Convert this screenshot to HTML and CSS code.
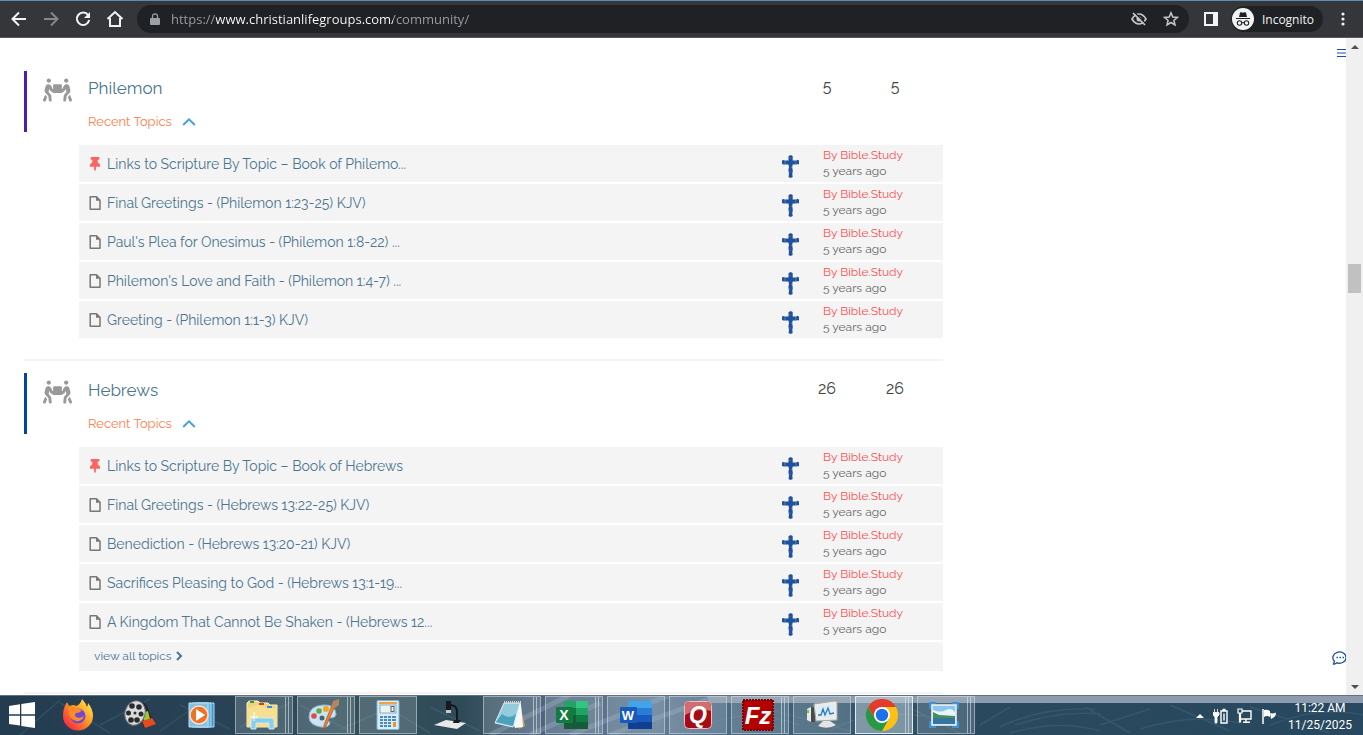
FILE: index.html
```html
<!DOCTYPE html>
<html lang="en">
<head>
  <meta charset="UTF-8">
  <meta name="viewport" content="width=device-width, initial-scale=1.0">
  <link rel="stylesheet" href="styles.css">
  <title>Community</title>
</head>
<body>

  <!-- shared icons -->
  <svg class="sprite" aria-hidden="true">
    <symbol id="people" viewBox="0 0 640 512">
      <path d="M128 96c26.500 0 48-21.500 48-48S154.500 0 128 0 80 21.500 80 48s21.500 48 48 48zm384 0c26.500 0 48-21.500 48-48S538.500 0 512 0s-48 21.500-48 48 21.500 48 48 48zm125.700 372.100l-44-110-41.100 46.400-2 18.200 27.700 69.200c5 12.500 17 20.100 29.700 20.100 4 0 8-.7 11.900-2.300 16.400-6.600 24.400-25.200 17.800-41.600zm-34.200-209.800L585 178.100c-4.600-20-18.600-36.800-37.500-44.900-18.500-8-39-6.700-56.100 3.300-22.700 13.400-39.700 34.500-48.100 59.400L432 229.800 416 240v-96c0-8.800-7.200-16-16-16H240c-8.800 0-16 7.200-16 16v96l-16.100-10.200-11.300-33.900c-8.300-25-25.400-46-48.100-59.400-17.200-10-37.600-11.300-56.100-3.300-18.900 8.100-32.900 24.900-37.500 44.900l-18.400 80.200c-4.600 20 .7 41.200 14.400 56.700l67.200 75.900 10.100 92.600C130 499.800 143.800 512 160 512c1.200 0 2.300-.1 3.500-.2 17.600-1.900 30.200-17.700 28.300-35.300l-10.100-92.800c-1.500-13-6.900-25.100-15.600-35l-43.300-49 17.600-70.300 6.800 20.400c4.100 12.500 11.900 23.400 24.500 32.600l51.100 32.500c4.600 2.900 12.100 4.600 17.200 5h160c5.100-.4 12.600-2.100 17.200-5l51.100-32.500c12.600-9.200 20.400-20 24.500-32.600l6.800-20.400 17.600 70.300-43.300 49c-8.700 9.900-14.100 22-15.600 35l-10.100 92.800c-1.900 17.600 10.800 33.400 28.300 35.300 1.200.1 2.300.2 3.500.2 16.100 0 30-12.100 31.800-28.500l10.100-92.600 67.200-75.900c13.600-15.500 19-36.700 14.400-56.700zM46.300 358.100l-44 110c-6.600 16.400 1.400 35 17.800 41.600 16.800 6.600 35.100-1.700 41.600-17.800l27.700-69.200-2-18.200-41.100-46.400z"/>
    </symbol>
    <symbol id="pin" viewBox="0 0 384 512">
      <path d="M298 214L286 96H328c13 0 24-11 24-24V24c0-13-11-24-24-24H56C43 0 32 11 32 24v48c0 13 11 24 24 24h42L86 214C37 237 0 277 0 328c0 13 11 24 24 24h136v104l1 4 24 48c3 6 11 6 14 0l24-48 1-4V352h136c13 0 24-11 24-24 0-51-38-91-86-114z"/>
    </symbol>
    <symbol id="file" viewBox="0 0 12 14">
      <path d="M1.200 .8H7.500L11 4.300V13.200H1.200Z" fill="none" stroke="currentColor" stroke-width="1.500" stroke-linejoin="round"/>
      <path d="M7 .8V4.800H11Z"/>
    </symbol>
    <symbol id="chevron-up" viewBox="0 0 14 8">
      <path d="M1.200 7L7 1.400L12.800 7" fill="none" stroke="currentColor" stroke-width="1.900"/>
    </symbol>
    <symbol id="cross" viewBox="0 0 17 23">
      <path d="M6.500 1.200L8.500 0L10.700 1V5.600H14.500L15.500 4.800L17 5.500V9.500L15.500 9L14.500 9.500H10.700L10.200 12L10.800 16L10.300 19L10.700 22L8.500 23L6.500 22L7 19L6.400 15L7 12L6.400 9.500H3L1.500 9.500L0 9V5.500L1.500 5L2.500 5.600H6.500Z"/>
      <path d="M3 6V9M13.800 6V9M7.500 3.500H8.500M9 12.500H10M7.500 17H8.500" stroke="#7f9cc3" stroke-width=".6"/>
    </symbol>
  </svg>

  <header class="toolbar">
    <button class="tool" aria-label="Back"><svg width="16" height="16" viewBox="0 0 16 16"><path d="M15 8H2M8 1.500L1.500 8L8 14.500"/></svg></button>
    <button class="tool tool-off" aria-label="Forward"><svg width="16" height="16" viewBox="0 0 16 16"><path d="M1 8H14M8 1.500L14.500 8L8 14.500"/></svg></button>
    <button class="tool" aria-label="Reload"><svg width="16" height="16" viewBox="0 0 16 16"><path d="M13.200 4.200A6.200 6.200 0 1 0 14.200 9"/><path d="M15 1V7H9Z" fill="currentColor" stroke="none"/></svg></button>
    <button class="tool" aria-label="Home"><svg width="18" height="18" viewBox="0 0 18 18"><path d="M1.500 9L9 2L16.500 9M4 8V16H14V8"/></svg></button>
    <div class="address">
      <svg class="lock" width="10" height="13" viewBox="0 0 10 13"><path d="M2.500 5V3.300a2.500 2.500 0 0 1 5 0V5" fill="none" stroke="#9aa0a6" stroke-width="1.300"/><rect y="5" width="10" height="7" rx="1" fill="#9aa0a6"/></svg>
      <input class="url" type="text" aria-label="Address" value="https://www.christianlifegroups.com/community/">
      <button class="tool tool-dim" aria-label="Cookies blocked"><svg width="16" height="14" viewBox="0 0 16 14"><path d="M1 7Q4 2 8 2T15 7Q12 12 8 12T1 7Z" stroke-width="1.700"/><circle cx="8" cy="7" r="2.500" fill="currentColor" stroke="none"/><path d="M3 0L16 13" stroke="#202124" stroke-width="1.500"/><path d="M2 1L14 13" stroke-width="1.700"/></svg></button>
      <button class="tool tool-dim" aria-label="Bookmark"><svg width="16" height="16" viewBox="0 0 16 16"><path d="M8 1.800L9.800 6L14.400 6.400L10.900 9.400L12 14L8 11.500L4 14L5.100 9.400L1.600 6.400L6.200 6Z" stroke-width="1.500"/></svg></button>
    </div>
    <button class="tool" aria-label="Side panel"><svg width="14" height="14" viewBox="0 0 14 14"><path d="M0 0H14V14H0ZM2 2V12H9V2Z" fill="currentColor" fill-rule="evenodd" stroke="none"/></svg></button>
    <button class="incognito">
      <svg width="22" height="22" viewBox="0 0 22 22"><circle cx="11" cy="11" r="11" fill="#f1f3f4"/><path d="M7 9L8 4.500Q9.500 4 11 4.700Q12.500 4 14 4.500L15 9Z" fill="#202124"/><path d="M4 10.500H18M9.500 15Q11 14 12.500 15" stroke="#202124" stroke-width="1.200" fill="none"/><circle cx="7.500" cy="15" r="2.200" fill="none" stroke="#202124" stroke-width="1.100"/><circle cx="14.500" cy="15" r="2.200" fill="none" stroke="#202124" stroke-width="1.100"/></svg>
      Incognito
    </button>
    <button class="tool" aria-label="Menu"><svg width="4" height="14" viewBox="0 0 4 14"><g fill="currentColor" stroke="none"><circle cx="2" cy="2" r="1.600"/><circle cx="2" cy="7" r="1.600"/><circle cx="2" cy="12" r="1.600"/></g></svg></button>
  </header>

  <div class="viewport">
    <main class="page">

      <section class="forum">
        <div class="forum-head forum-purple">
          <svg class="forum-icon"><use href="#people"/></svg>
          <div class="forum-info">
            <a class="forum-name" href="#">Philemon</a>
            <button class="recent">Recent Topics <svg width="14" height="8"><use href="#chevron-up"/></svg></button>
          </div>
          <span class="count">5</span>
          <span class="count">5</span>
        </div>
        <ul class="topics">
          <li class="topic">
            <svg class="topic-icon topic-pin"><use href="#pin"/></svg>
            <a class="topic-name" href="#">Links to Scripture By Topic – Book of Philemo...</a>
            <svg class="avatar"><use href="#cross"/></svg>
            <div class="meta"><a href="#">By Bible.Study</a><span>5 years ago</span></div>
          </li>
          <li class="topic">
            <svg class="topic-icon"><use href="#file"/></svg>
            <a class="topic-name" href="#">Final Greetings - (Philemon 1:23-25) KJV)</a>
            <svg class="avatar"><use href="#cross"/></svg>
            <div class="meta"><a href="#">By Bible.Study</a><span>5 years ago</span></div>
          </li>
          <li class="topic">
            <svg class="topic-icon"><use href="#file"/></svg>
            <a class="topic-name" href="#">Paul's Plea for Onesimus - (Philemon 1:8-22) ...</a>
            <svg class="avatar"><use href="#cross"/></svg>
            <div class="meta"><a href="#">By Bible.Study</a><span>5 years ago</span></div>
          </li>
          <li class="topic">
            <svg class="topic-icon"><use href="#file"/></svg>
            <a class="topic-name" href="#">Philemon's Love and Faith - (Philemon 1:4-7) ...</a>
            <svg class="avatar"><use href="#cross"/></svg>
            <div class="meta"><a href="#">By Bible.Study</a><span>5 years ago</span></div>
          </li>
          <li class="topic">
            <svg class="topic-icon"><use href="#file"/></svg>
            <a class="topic-name" href="#">Greeting - (Philemon 1:1-3) KJV)</a>
            <svg class="avatar"><use href="#cross"/></svg>
            <div class="meta"><a href="#">By Bible.Study</a><span>5 years ago</span></div>
          </li>
        </ul>
      </section>

      <section class="forum">
        <div class="forum-head forum-blue">
          <svg class="forum-icon"><use href="#people"/></svg>
          <div class="forum-info">
            <a class="forum-name" href="#">Hebrews</a>
            <button class="recent">Recent Topics <svg width="14" height="8"><use href="#chevron-up"/></svg></button>
          </div>
          <span class="count">26</span>
          <span class="count">26</span>
        </div>
        <ul class="topics">
          <li class="topic">
            <svg class="topic-icon topic-pin"><use href="#pin"/></svg>
            <a class="topic-name" href="#">Links to Scripture By Topic – Book of Hebrews</a>
            <svg class="avatar"><use href="#cross"/></svg>
            <div class="meta"><a href="#">By Bible.Study</a><span>5 years ago</span></div>
          </li>
          <li class="topic">
            <svg class="topic-icon"><use href="#file"/></svg>
            <a class="topic-name" href="#">Final Greetings - (Hebrews 13:22-25) KJV)</a>
            <svg class="avatar"><use href="#cross"/></svg>
            <div class="meta"><a href="#">By Bible.Study</a><span>5 years ago</span></div>
          </li>
          <li class="topic">
            <svg class="topic-icon"><use href="#file"/></svg>
            <a class="topic-name" href="#">Benediction - (Hebrews 13:20-21) KJV)</a>
            <svg class="avatar"><use href="#cross"/></svg>
            <div class="meta"><a href="#">By Bible.Study</a><span>5 years ago</span></div>
          </li>
          <li class="topic">
            <svg class="topic-icon"><use href="#file"/></svg>
            <a class="topic-name" href="#">Sacrifices Pleasing to God - (Hebrews 13:1-19...</a>
            <svg class="avatar"><use href="#cross"/></svg>
            <div class="meta"><a href="#">By Bible.Study</a><span>5 years ago</span></div>
          </li>
          <li class="topic">
            <svg class="topic-icon"><use href="#file"/></svg>
            <a class="topic-name" href="#">A Kingdom That Cannot Be Shaken - (Hebrews 12...</a>
            <svg class="avatar"><use href="#cross"/></svg>
            <div class="meta"><a href="#">By Bible.Study</a><span>5 years ago</span></div>
          </li>
          <li class="view-all">
            <a href="#">view all topics <svg width="7" height="10" viewBox="0 0 7 10"><path d="M1 1L5 5L1 9" fill="none" stroke="currentColor" stroke-width="2"/></svg></a>
          </li>
        </ul>
      </section>

      <button class="float float-menu" aria-label="Open menu"><svg width="9" height="8" viewBox="0 0 9 8"><path d="M0 .5H9M0 4H9M0 7.500H9" stroke="#1d4f9c"/></svg></button>
      <button class="float float-chat" aria-label="Chat"><svg width="16" height="14" viewBox="0 0 16 14"><path d="M2.500 13Q1 13.500 1.500 12.500L2.500 10.300A6.600 5.600 0 1 1 5 11.800Q4 12.700 2.500 13Z" fill="none" stroke="#1d4f9c" stroke-width="1.300"/><path d="M4.500 6.500H6M7.500 6.500H9M10.500 6.500H12" stroke="#1d4f9c" stroke-width="1.500"/></svg></button>
    </main>

    <div class="scrollbar">
      <button class="scroll-arrow" aria-label="Scroll up"><svg width="8" height="4" viewBox="0 0 8 4"><path d="M0 4L4 0L8 4Z"/></svg></button>
      <div class="scroll-track"><div class="scroll-thumb"></div></div>
      <button class="scroll-arrow" aria-label="Scroll down"><svg width="8" height="4" viewBox="0 0 8 4"><path d="M0 0L4 4L8 0Z"/></svg></button>
    </div>
  </div>

  <footer class="taskbar">
    <!-- wallpaper showing through the bar -->
    <svg class="wallpaper" viewBox="0 0 1363 40" preserveAspectRatio="none" aria-hidden="true">
      <defs>
        <linearGradient id="wall" x2="1" y2="0">
          <stop offset="0" stop-color="#243c50"/><stop offset=".17" stop-color="#294256"/><stop offset=".25" stop-color="#34505b"/><stop offset=".34" stop-color="#304b58"/><stop offset=".4" stop-color="#50657e"/><stop offset=".48" stop-color="#667e97"/><stop offset=".55" stop-color="#45637d"/><stop offset=".63" stop-color="#36566d"/><stop offset=".72" stop-color="#2b495e"/><stop offset="1" stop-color="#27485f"/>
        </linearGradient>
      </defs>
      <rect width="1363" height="40" fill="url(#wall)"/>
      <g fill="none" stroke="#a8bdd3" stroke-opacity=".28" stroke-width="5"><path d="M490 40L570 0M530 40L600 8M570 40L670 0M610 40L720 0" /></g>
      <g fill="none" stroke="#6292a0" stroke-opacity=".2" stroke-width="1.500"><path d="M20 40L60 5M60 8L110 38M100 30L150 4M160 36L200 8M180 10L230 34M240 32L290 8M300 10L350 36M340 34L400 9M380 8L430 38M430 12L480 36M700 34Q740 10 800 30M760 12L850 36M830 36Q870 12 930 22M900 8L960 38M980 30L1010 12M1000 32Q1040 12 1095 14M1015 30Q1060 15 1100 19M1010 38Q1060 24 1100 36M1085 12L1130 38M1100 30L1150 14M1140 34Q1190 18 1240 28M1170 10L1230 36M1250 12L1330 38M1270 30Q1320 10 1363 20"/></g>
      <rect x="708" width="655" height="8" fill="#8c9bae"/>
      <path d="M0 .5H1363" stroke="#617084"/>
    </svg>

    <button class="start" aria-label="Start"><svg width="26" height="26" viewBox="0 0 26 26"><path d="M0 4L11 2.200V12.300H0ZM12.300 2L26 0V12.300H12.300ZM0 13.700H11V23.600L0 22ZM12.300 13.700H26V26L12.300 24Z" fill="#fff"/></svg></button>

    <button class="task" aria-label="Firefox"><svg width="32" height="32" viewBox="0 0 32 32"><defs><linearGradient id="ff" x1="1" y1="0" x2="0" y2="1"><stop offset=".1" stop-color="#ffe44a"/><stop offset=".45" stop-color="#ff9625"/><stop offset=".8" stop-color="#f93c3d"/><stop offset="1" stop-color="#e31587"/></linearGradient></defs><path d="M20 0Q24 4 25 8Q26 6 26 4Q31 10 31 17A15 14.500 0 0 1 1 17Q1 9 5 3Q6 6 8 7Q11 5 14 7Q18 6 20 0Z" fill="url(#ff)"/><circle cx="16" cy="17" r="7.500" fill="#6f48d8"/><path d="M6 9Q10 6 14 9L20 11Q18 14 14 14Q12 16 14 18Q18 20 22 17Q20 23 14 22Q7 20 7 13Z" fill="#ff8b24"/></svg></button>

    <button class="task" aria-label="Movie Maker"><svg width="32" height="32" viewBox="0 0 32 32"><path d="M12 1Q22 2 24 10L30 25L20 29L16 14Z" fill="#202326"/><path d="M13 3Q21 4 22 12L17 14Z" fill="#2c70c9"/><path d="M18 14L24 12L26 20L20 22Z" fill="#9dc72e"/><path d="M18 22L28 19L32 25L21 29Z" fill="#e74a1d"/><ellipse cx="11" cy="14" rx="10" ry="12.500" transform="rotate(16 11 14)" fill="#d8dadb" stroke="#686c70"/><g fill="#292c2f"><circle cx="8" cy="7" r="2.800"/><circle cx="15" cy="8" r="2.800"/><circle cx="4.500" cy="14" r="2.500"/><circle cx="17" cy="15" r="2.500"/><circle cx="7" cy="21" r="2.800"/><circle cx="13" cy="21" r="2.800"/><circle cx="11" cy="14" r="1.500"/></g></svg></button>

    <button class="task" aria-label="Media Player"><svg width="28" height="26" viewBox="0 0 28 26"><path d="M8 1H26V25H8Z" fill="#3f94c9" stroke="#a9dcf3"/><path d="M4 1H23V25H4Z" fill="#69b2dc" stroke="#a9dcf3"/><path d="M1 1H20V25H1Z" fill="#83c1e3" stroke="#b8e2f5"/><circle cx="11" cy="13" r="9" fill="#ed7225" stroke="#f7ded0" stroke-width="1.500"/><path d="M8 7L17 13L8 19Z" fill="#fff"/></svg></button>

    <button class="task open stacked" aria-label="Explorer"><svg width="32" height="30" viewBox="0 0 32 30"><path d="M1 27V3L3 1H12L14 3H22L24 5H31V27Z" fill="#edd57f" stroke="#fff2be"/><path d="M1 8L12 5L31 9V27H1Z" fill="#f6df91"/><path d="M4 2H8" stroke="#2c9b3e" stroke-width="2"/><path d="M13 4H18" stroke="#d83a2c" stroke-width="2"/><path d="M21 7H26" stroke="#318ee0" stroke-width="2"/><path d="M5 29V21Q5 18 8 18H25Q28 18 28 21V29H23V23H10V29Z" fill="#88cdec" stroke="#c7ecfa"/><path d="M8 12V21M4 17H12" stroke="#fff"/></svg></button>

    <button class="task open stacked" aria-label="Paint"><svg width="32" height="32" viewBox="0 0 32 32"><path d="M1 18Q1 7 15 6Q27 5 28 15Q28 19 22 19Q19 20 22 24Q21 29 13 28Q1 26 1 18Z" fill="#c9e3f2" stroke="#8db5cf"/><circle cx="6" cy="17" r="2.800" fill="#d84e48"/><circle cx="11" cy="12" r="2.800" fill="#5aad45"/><circle cx="18" cy="10" r="3" fill="#f2a529"/><circle cx="14" cy="19" r="2.500" fill="#466476"/><path d="M27 7L18 27L16 31L16 26L24 6Z" fill="#ec8432" stroke="#a8521a" stroke-width=".7"/><path d="M23 8L25 2L31 0L31 6L27 9Z" fill="#b6855e"/></svg></button>

    <button class="task open" aria-label="Calculator"><svg width="24" height="30" viewBox="0 0 24 30"><rect x="1" y=".5" width="22" height="29" rx="1" fill="#d5edfc" stroke="#81b3d8"/><path d="M3 3H21" stroke="#f5a23b" stroke-width="2"/><rect x="4" y="5" width="16" height="8" fill="#edf3ed" stroke="#8baabf"/><rect x="15" y="6.500" width="3" height="5" fill="none" stroke="#53626c"/><g fill="#4f87b6"><path d="M4 16h3v2h-3zM8 16h3v2h-3zM12 16h3v2h-3zM16 16h4v2h-4zM4 19h3v2h-3zM8 19h3v2h-3zM12 19h3v2h-3zM16 19h4v2h-4zM4 22h3v2h-3zM8 22h3v2h-3zM12 22h3v2h-3zM4 25h3v2h-3zM8 25h3v2h-3zM12 25h3v2h-3z"/></g><path d="M17 22H20V27H17Z" fill="#f39421"/></svg></button>

    <button class="task" aria-label="Document camera"><svg width="34" height="30" viewBox="0 0 34 30"><path d="M13 20L33 23L24 29L1 25Z" fill="#e7e8e8"/><path d="M17 5Q25 5 24 14V20" fill="none" stroke="#15191c" stroke-width="2"/><path d="M13 1H18V13H13Z" fill="#15191c"/><path d="M13 10H18V13H13Z" fill="#c7c9ca"/><path d="M21 20H28L26 23H20Z" fill="#181c1e"/></svg></button>

    <button class="task open stacked" aria-label="Notepad"><svg width="32" height="28" viewBox="0 0 32 28"><path d="M26 2L31 25L25 28Z" fill="#c7a369"/><path d="M11 2L27 3L29 26L21 27Z" fill="#f5f8f8"/><path d="M10 2H26L19 26L1 22Z" fill="#93cbdc" stroke="#d8eff5"/><path d="M8 13Q15 19 22 13L19 25L2 21Z" fill="#4ba2bd"/><path d="M10 1.500H27" stroke="#d7d9d9" stroke-width="3" stroke-dasharray="1 1"/></svg></button>

    <button class="task open stacked" aria-label="Excel"><svg width="32" height="28" viewBox="0 0 32 28"><path d="M8 0H20V7H8Z" fill="#21a366"/><path d="M20 0H32V7H20Z" fill="#33c481"/><path d="M8 7H20V14H8Z" fill="#107c41"/><path d="M20 7H32V14H20Z" fill="#21a366"/><path d="M8 14H32V28H8Z" fill="#185c37"/><path d="M20 14H32V21H20Z" fill="#107c41"/><rect y="6" width="17" height="16" rx="1" fill="#107c41"/><text class="glyph" x="8" y="19" font-size="14">X</text></svg></button>

    <button class="task open" aria-label="Word"><svg width="32" height="28" viewBox="0 0 32 28"><path d="M8 0H32V7H8Z" fill="#41a5ee"/><path d="M8 7H32V14H8Z" fill="#2b7cd3"/><path d="M8 14H32V21H8Z" fill="#185abd"/><path d="M8 21H32V28H8Z" fill="#103f91"/><rect y="6" width="17" height="16" rx="1" fill="#185abd"/><text class="glyph" x="8" y="19" font-size="13">W</text></svg></button>

    <button class="task open" aria-label="Quicken"><svg width="28" height="28" viewBox="0 0 28 28"><rect x=".5" y=".5" width="27" height="27" rx="4" fill="#a50c16" stroke="#efbcbf"/><path d="M1 5Q1 1 5 1H23Q27 1 27 5V10Q14 7 1 14Z" fill="#cf6d70"/><text class="glyph glyph-italic" x="14" y="22" font-size="23">Q</text></svg></button>

    <button class="task open stacked" aria-label="FileZilla"><svg width="32" height="32" viewBox="0 0 32 32"><rect x="1" y="1" width="30" height="30" fill="#b30000"/><rect x="1" y="1" width="30" height="30" fill="none" stroke="#7c0202" stroke-width="2" stroke-dasharray="2 1"/><text class="glyph glyph-italic" x="16" y="25" font-size="24">Fz</text></svg></button>

    <button class="task open" aria-label="Performance monitor"><svg width="32" height="28" viewBox="0 0 32 28"><path d="M1 8L5 6V21L1 19Z" fill="#e6e7e4"/><path d="M5 6L9 7V21L5 21Z" fill="#454c4d"/><path d="M2 9V12" stroke="#73c849" stroke-width="2"/><path d="M8 3L29 0Q31 0 31 2V19L10 20Z" fill="#ecece9" stroke="#a8adaf"/><path d="M11 5L28 3V16L12 17Z" fill="#dcedf8"/><path d="M12 14L15 14L17 8L19 14L22 7L24 13L28 12" fill="none" stroke="#2c79b8" stroke-width="1.300"/><path d="M17 20H24L30 24Q22 29 12 25Z" fill="#e3e4e2"/></svg></button>

    <button class="task open stacked active" aria-label="Chrome"><svg width="32" height="32" viewBox="0 0 32 32"><circle cx="16" cy="16" r="16" fill="#fbc116"/><path d="M16 8H29.900A16 16 0 0 0 2.100 8L9.100 20Z" fill="#e33b2e"/><path d="M2.100 8A16 16 0 0 0 16 32L22.900 20L9.100 20Z" fill="#279847"/><circle cx="16" cy="16" r="8" fill="#fff"/><circle cx="16" cy="16" r="6.200" fill="#1a73e8"/></svg></button>

    <button class="task open stacked" aria-label="Pictures"><svg width="30" height="26" viewBox="0 0 30 26"><path d="M1 7V1H7M23 1H29V7M29 19V25H23M7 25H1V19" fill="none" stroke="#3b91d7" stroke-width="3"/><rect x="3" y="3" width="24" height="20" fill="#8bc6ed" stroke="#f3f6f7" stroke-width="1.500"/><path d="M4 8Q12 11 17 8T26 10V15H4Z" fill="#e7f4fb"/><path d="M4 10L10 13L26 14V17H4Z" fill="#438f56"/><path d="M4 16H26V22H4Z" fill="#3575a0"/></svg></button>

    <div class="tray">
      <svg width="8" height="4" viewBox="0 0 8 4"><path d="M0 4L4 0L8 4Z" fill="#fff"/></svg>
      <svg width="15" height="16" viewBox="0 0 15 16"><path d="M1.500 1V4M4.500 1V4M0 4.500H6V7L4 9V15H2V9L0 7Z" fill="#fff" stroke="#fff" stroke-width=".8"/><path d="M8 3H14V15H8ZM9.500 1.500H12.500M11 5.500V12.500" fill="none" stroke="#fff" stroke-width="1.400"/></svg>
      <svg width="16" height="16" viewBox="0 0 16 16"><path d="M5 3H14V11H4M9 11V14M6 14.200H13" fill="none" stroke="#fff" stroke-width="1.400"/><path d="M1 1H5V5H3.500V14H2.500V5H1Z" fill="none" stroke="#fff" stroke-width="1.200"/></svg>
      <svg width="15" height="15" viewBox="0 0 15 15"><path d="M1 0V15" stroke="#fff" stroke-width="1.500"/><path d="M2 1Q5 0 8 2V8Q5 6 2 8ZM8 4Q11 5 14 3.500Q14 8 9 10Z" fill="#fff"/></svg>
    </div>
    <div class="clock"><span>11:22 AM</span><span>11/25/2025</span></div>
  </footer>

</body>
</html>
```

FILE: styles.css
```css
* {
  box-sizing: border-box;
}

body {
  margin: 0;
  height: 100vh;
  display: flex;
  flex-direction: column;
  overflow: hidden;
  background: #fff;
  font-family: Raleway, Lato, sans-serif;
}

button {
  padding: 0;
  border: 0;
  background: none;
  font: inherit;
  color: inherit;
}

a {
  color: inherit;
  text-decoration: none;
}

svg {
  display: block;
  flex: none;
  fill: currentColor;
}

.sprite {
  position: absolute;
  width: 0;
  height: 0;
}

/* browser toolbar */
.toolbar {
  display: flex;
  align-items: center;
  flex: none;
  height: 38px;
  padding: 0 4px 0 3px;
  background: #35363a;
  border-top: 1px solid #5b8db8;
  border-bottom: 1px solid #57585b;
  color: #f1f3f4;
  font-family: "Open Sans", "Noto Sans", sans-serif;
  font-size: 12px;
}

.tool {
  display: grid;
  place-items: center;
  flex: none;
  width: 32px;
  height: 28px;
}

.tool svg {
  fill: none;
  stroke: currentColor;
  stroke-width: 2;
}

.tool-off {
  color: #85868a;
}

.tool-dim {
  color: #c4c7ca;
}

.address {
  display: flex;
  align-items: center;
  flex: 1;
  height: 28px;
  margin: 0 6px;
  padding: 0 2px 0 13px;
  border-radius: 14px;
  background: #202124;
}

.url {
  flex: 1;
  min-width: 0;
  margin-left: 11px;
  padding: 0;
  border: 0;
  outline: 0;
  font-family: inherit;
  font-size: 13px;
  line-height: 20px;
  color: transparent;
  /* the host part is brighter than the rest */
  background: linear-gradient(to right, #9aa0a6 45px, #fff 45px, #fff 222px, #9aa0a6 222px);
  -webkit-background-clip: text;
  background-clip: text;
}

.incognito {
  display: flex;
  align-items: center;
  gap: 8px;
  height: 26px;
  margin: 0 4px;
  padding: 0 9px 0 1px;
  border-radius: 13px;
  background: #202124;
}

/* page */
.viewport {
  display: flex;
  flex: 1;
  min-height: 0;
}

.page {
  position: relative;
  flex: 1;
  min-width: 0;
  padding: 33px 24px 0;
  overflow: hidden;
}

.forum {
  max-width: 919px;
  margin-bottom: 12px;
  padding-bottom: 21px;
  border-bottom: 2px solid #f4f4f4;
}

.forum-head {
  display: flex;
  height: 61px;
  margin-bottom: 13px;
  padding: 7px 14px 0 16px;
  border-left: 3px solid;
}

.forum-purple {
  border-color: #4c1fab;
}

.forum-blue {
  border-color: #04469c;
}

.forum-icon {
  width: 29px;
  height: 24px;
  color: #999;
}

.forum-info {
  display: flex;
  flex: 1;
  flex-direction: column;
  align-items: flex-start;
  gap: 14px;
  padding-left: 16px;
}

.forum-name {
  font-size: 17px;
  line-height: 20px;
  color: #4b7590;
}

.recent {
  display: flex;
  align-items: center;
  gap: 10px;
  font-size: 13px;
  line-height: 20px;
  color: #ff8050;
}

.recent svg {
  color: #43a0df;
}

.count {
  width: 68px;
  font-size: 16px;
  line-height: 18px;
  text-align: center;
  color: #444;
}

.topics {
  display: flex;
  flex-direction: column;
  gap: 2px;
  margin: 0 0 0 55px;
  padding: 0;
  list-style: none;
}

.topic {
  display: flex;
  align-items: center;
  height: 37px;
  padding-left: 10px;
  background: #f4f4f4;
  color: #777;
}

.topic-icon {
  width: 12px;
  height: 14px;
}

.topic-pin {
  color: #fa6464;
}

.topic-name {
  flex: 1;
  padding-left: 6px;
  font-size: 14px;
  line-height: 20px;
  color: #4b7590;
}

.avatar {
  width: 17px;
  height: 23px;
  margin: 5px 24px 0 0;
  color: #20529b;
}

.meta {
  display: flex;
  flex-direction: column;
  width: 120px;
  padding-bottom: 2px;
  font-size: 12px;
  line-height: 16px;
  color: #666;
}

.meta a {
  color: #ff4f4f;
}

.view-all {
  padding: 4px 15px 5px;
  background: #f4f4f4;
  font-size: 12px;
  line-height: 20px;
  color: #4b7590;
}

.view-all a {
  display: inline-flex;
  align-items: center;
  gap: 4px;
}

.float {
  position: absolute;
}

.float-menu {
  top: 11px;
  right: 0;
}

.float-chat {
  right: -2px;
  bottom: 30px;
}

.scrollbar {
  display: flex;
  flex-direction: column;
  flex: none;
  width: 17px;
  background: #f0f0f0;
  color: #505050;
}

.scroll-arrow {
  display: grid;
  place-items: center;
  height: 17px;
}

.scroll-track {
  display: flex;
  flex: 1;
  flex-direction: column;
  padding: 0 2px;
}

.scroll-track::before {
  content: "";
  flex: 209;
}

.scroll-track::after {
  content: "";
  flex: 385;
}

.scroll-thumb {
  height: 29px;
  background: #c1c1c1;
}

/* taskbar */
.taskbar {
  position: relative;
  display: flex;
  align-items: center;
  flex: none;
  height: 40px;
  background: #2b4458;
  color: #fff;
}

.wallpaper {
  position: absolute;
  inset: 0;
  width: 100%;
  height: 100%;
}

.start,
.task,
.tray,
.clock {
  position: relative;
}

.start {
  width: 47px;
  padding-left: 9px;
}

.task {
  display: grid;
  place-items: center;
  flex: none;
  width: 58px;
  height: 38px;
  margin: 0 2px;
}

.open {
  border: 1px solid rgba(220, 230, 235, .5);
  background: rgba(190, 210, 215, .22);
}

.stacked {
  padding-right: 5px;
}

.stacked::after {
  content: "";
  position: absolute;
  top: 0;
  right: 3px;
  bottom: 0;
  width: 2px;
  border: solid rgba(220, 230, 235, .6);
  border-width: 0 1px;
}

.active {
  border-color: #e4eaee;
  background: rgba(200, 215, 225, .5);
}

.glyph {
  fill: #fff;
  font-family: "Liberation Sans", sans-serif;
  font-weight: bold;
  text-anchor: middle;
}

.glyph-italic {
  font-style: italic;
}

.tray {
  display: flex;
  align-items: center;
  gap: 9px;
  margin-left: auto;
  padding-top: 2px;
}

.clock {
  display: flex;
  flex-direction: column;
  align-items: center;
  width: 86px;
  padding-top: 3px;
  font-family: Roboto, "Open Sans", sans-serif;
  font-size: 12px;
  line-height: 17px;
}
```
